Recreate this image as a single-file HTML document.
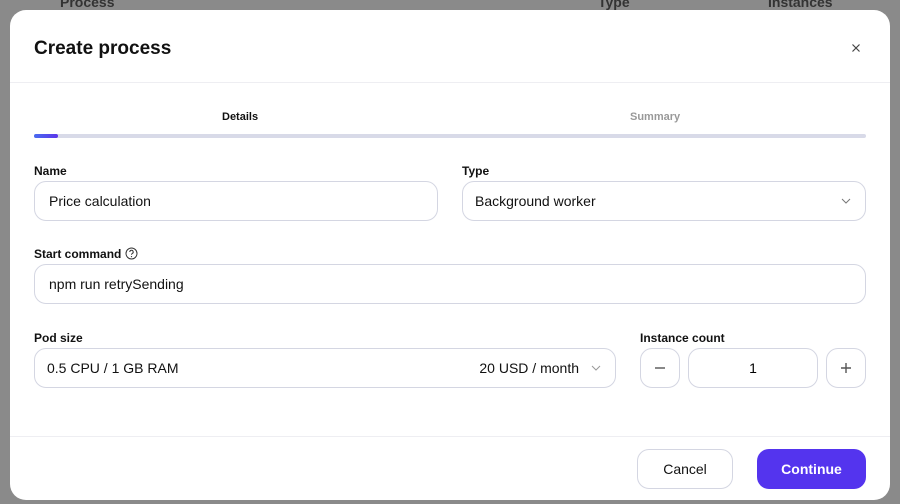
<!DOCTYPE html>
<html><head><style>
*{box-sizing:border-box;margin:0;padding:0}
body{width:900px;height:504px;overflow:hidden;background:#8a8a8a;font-family:"Liberation Sans",sans-serif;position:relative}
.bgt{position:absolute;top:-6px;font-size:14px;font-weight:bold;color:#333}
.m{position:absolute;left:10px;top:10px;width:880px;height:490px;background:#fff;border-radius:16px;overflow:hidden}
.a{position:absolute}
.t{left:24px;top:28px;font-size:19px;font-weight:bold;color:#111}
.hl{left:0;right:0;height:1px;background:#eeeef2}
.lab{font-size:12px;font-weight:bold;color:#111}
.in{border:1px solid #d4d6e2;border-radius:12px;height:40px;font-size:14px;color:#111;line-height:38px;padding-left:14px}
.btn{border:1px solid #d4d6e2;border-radius:12px;height:40px;text-align:center;line-height:38px;font-size:14px}
</style></head><body>
<div class="bgt" style="left:60px">Process</div>
<div class="bgt" style="left:598px">Type</div>
<div class="bgt" style="left:768px">Instances</div>
<div class="m">
<div class="a t">Create process</div>
<div class="a" style="left:838px;top:30px;width:16px;height:16px"><svg width="16" height="16"><path d="M4.5 4.5L11.5 11.5M11.5 4.5L4.5 11.5" stroke="#444" stroke-width="1.2"/></svg></div>
<div class="a hl" style="top:72px"></div>
<div class="a" style="left:212px;top:101px;font-size:11px;font-weight:bold;color:#111">Details</div>
<div class="a" style="left:620px;top:101px;font-size:11px;font-weight:bold;color:#999">Summary</div>
<div class="a" style="left:24px;top:124px;width:832px;height:4px;border-radius:2px;background:#d8dae8"></div>
<div class="a" style="left:24px;top:124px;width:24px;height:4px;border-radius:2px;background:linear-gradient(90deg,#4a6cf0,#5b35ea)"></div>
<div class="a lab" style="left:24px;top:154px">Name</div>
<div class="a in" style="left:24px;top:171px;width:404px">Price calculation</div>
<div class="a lab" style="left:452px;top:154px">Type</div>
<div class="a in" style="left:452px;top:171px;width:404px;padding-left:12px">Background worker<svg style="position:absolute;right:14px;top:15px" width="10" height="8"><path d="M1 2L5 6L9 2" stroke="#777" fill="none"/></svg></div>
<div class="a lab" style="left:24px;top:237px">Start command <svg style="vertical-align:-2px" width="13" height="13"><circle cx="6.5" cy="6.5" r="5.5" stroke="#333" fill="none"/><path d="M4.8 5a1.7 1.7 0 1 1 2.4 1.5c-.5.3-.7.6-.7 1.2" stroke="#333" fill="none"/><circle cx="6.5" cy="9.6" r=".6" fill="#333"/></svg></div>
<div class="a in" style="left:24px;top:254px;width:832px">npm run retrySending</div>
<div class="a lab" style="left:24px;top:321px">Pod size</div>
<div class="a in" style="left:24px;top:338px;width:582px;padding-left:12px">0.5 CPU / 1 GB RAM<span style="position:absolute;right:36px">20 USD / month</span><svg style="position:absolute;right:14px;top:15px" width="10" height="8"><path d="M1 2L5 6L9 2" stroke="#999" fill="none"/></svg></div>
<div class="a lab" style="left:630px;top:321px">Instance count</div>
<div class="a btn" style="left:630px;top:338px;width:40px"><svg style="margin-top:13px" width="12" height="12"><path d="M1 6H11" stroke="#555" stroke-width="1.4"/></svg></div>
<div class="a btn" style="left:678px;top:338px;width:130px">1</div>
<div class="a btn" style="left:816px;top:338px;width:40px"><svg style="margin-top:13px" width="12" height="12"><path d="M1 6H11M6 1V11" stroke="#555" stroke-width="1.4"/></svg></div>
<div class="a hl" style="top:426px"></div>
<div class="a btn" style="left:627px;top:439px;width:96px;font-size:14px;color:#111;line-height:38px">Cancel</div>
<div class="a" style="left:747px;top:439px;width:109px;height:40px;border-radius:12px;background:#5434ee;color:#fff;font-weight:bold;font-size:14px;text-align:center;line-height:40px">Continue</div>
</div>
</body></html>
